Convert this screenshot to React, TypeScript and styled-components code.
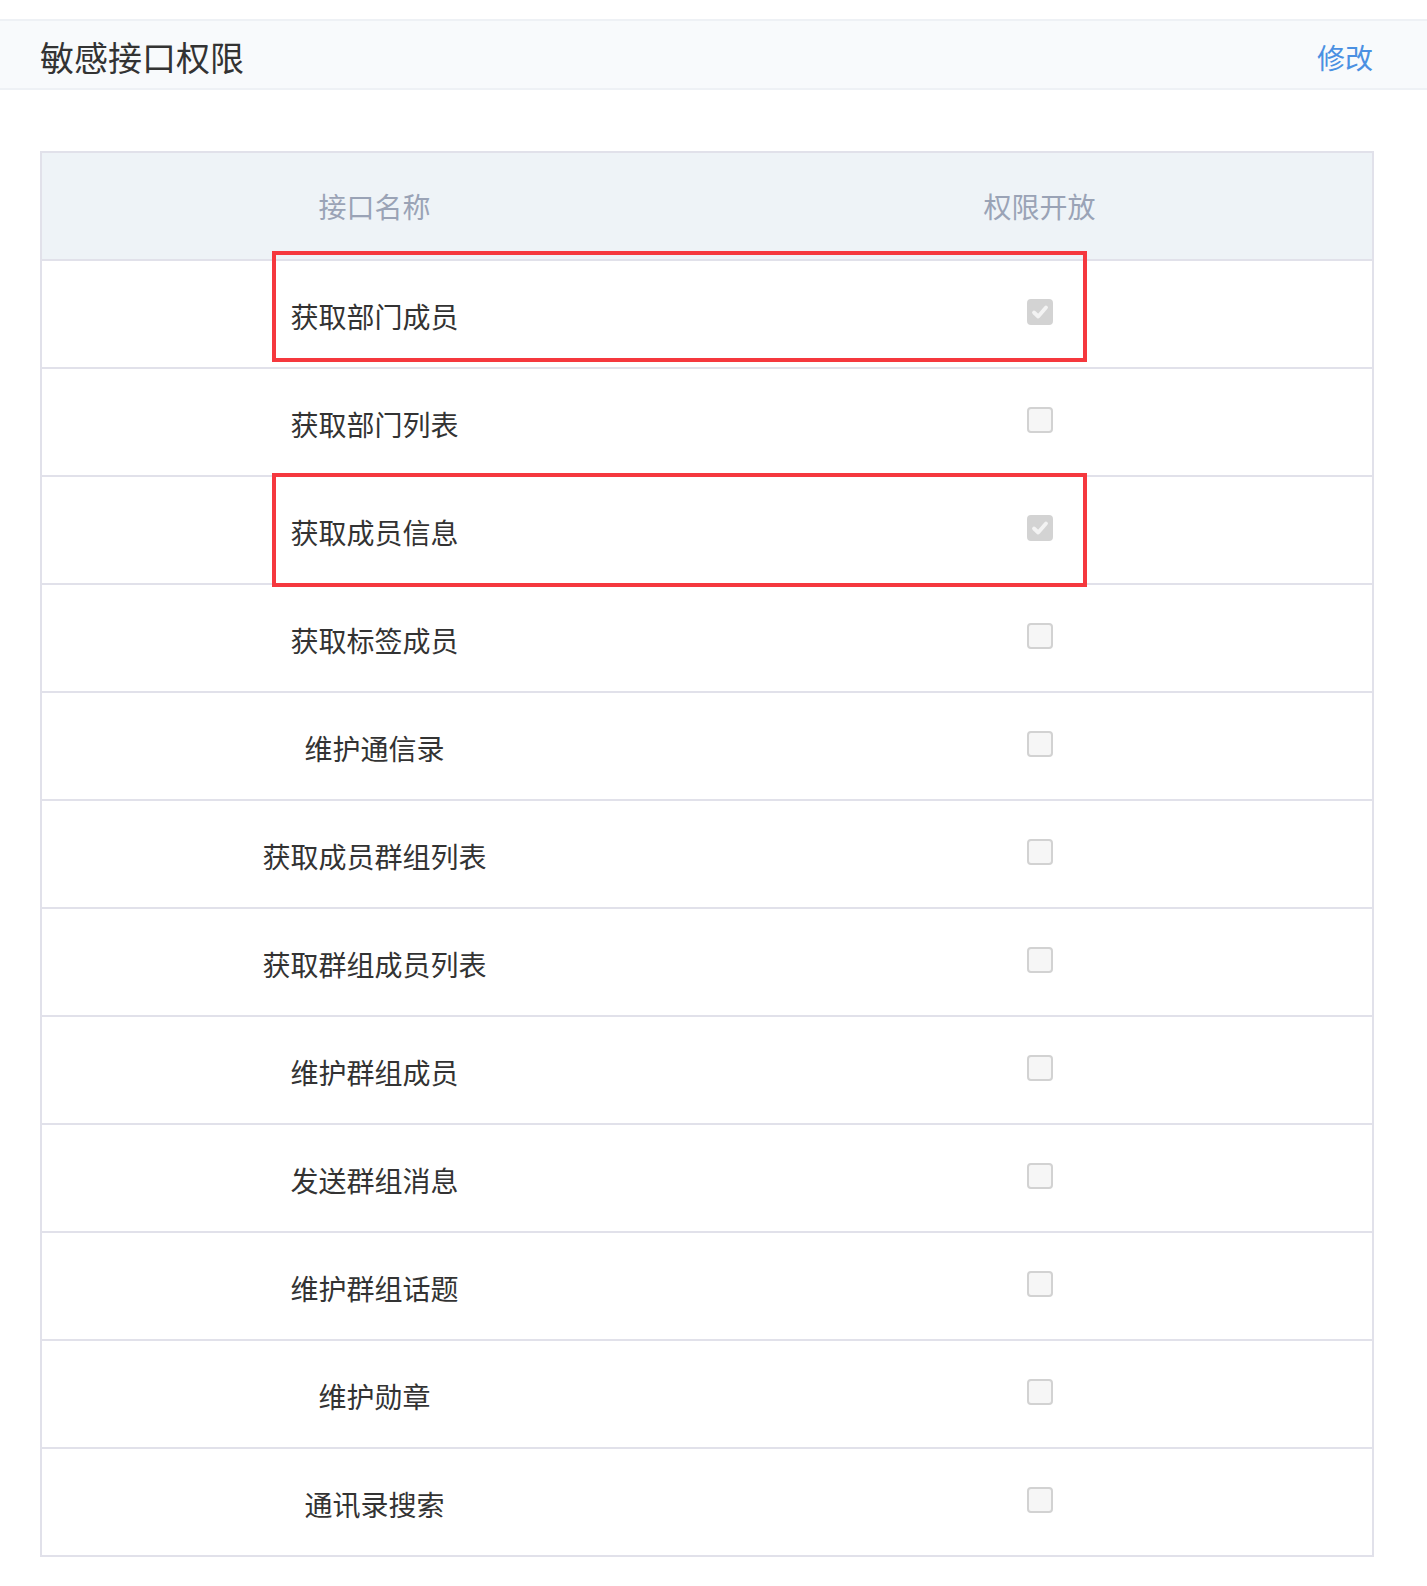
import React from "react";
import styled, { createGlobalStyle } from "styled-components";

const GlobalStyle = createGlobalStyle`
  body {
    margin: 0;
    background: #ffffff;
    font-family: "Noto Sans CJK SC", "Noto Sans", sans-serif;
  }
`;

const Page = styled.div`
  padding-top: 19px;
  padding-bottom: 30px;
`;

const TitleBar = styled.div`
  display: flex;
  align-items: center;
  justify-content: space-between;
  height: 62px;
  padding: 5px 54px 0 40px;
  background: #f8fafc;
  border-top: 2px solid #eef1f5;
  border-bottom: 2px solid #eef1f5;
`;

const Title = styled.div`
  font-size: 34px;
  color: #333333;
  line-height: 1;
`;

const EditLink = styled.a`
  font-size: 28px;
  color: #4a90e2;
  line-height: 1;
  cursor: pointer;
`;

const Table = styled.div`
  margin: 61px 53px 0 40px;
  border: 2px solid #e1e1ea;
`;

const HeadRow = styled.div`
  display: grid;
  grid-template-columns: 1fr 1fr;
  height: 106px;
  background: #eef3f7;
  border-bottom: 2px solid #e1e1ea;
`;

const HeadCell = styled.div`
  display: flex;
  align-items: center;
  justify-content: center;
  font-size: 28px;
  color: #9aa3b6;
`;

const Row = styled.div`
  position: relative;
  display: grid;
  grid-template-columns: 1fr 1fr;
  height: 106px;
  border-top: 2px solid #e1e1ea;

  &:first-of-type {
    border-top: none;
  }
`;

const Cell = styled.div`
  display: flex;
  align-items: center;
  justify-content: center;
  font-size: 28px;
  color: #333333;
  padding-top: 3px;
`;

const Check = styled.span<{ $on: boolean }>`
  display: inline-flex;
  align-items: center;
  justify-content: center;
  box-sizing: border-box;
  width: 26px;
  height: 26px;
  margin-bottom: 8px;
  border-radius: 4px;
  background: ${({ $on }) => ($on ? "#d3d3d3" : "#f6f6f6")};
  border: 2px solid ${({ $on }) => ($on ? "#d3d3d3" : "#d2d2d2")};
`;

const Highlight = styled.div<{ $top: number; $height: number }>`
  position: absolute;
  z-index: 1;
  left: 230px;
  width: 815px;
  top: ${({ $top }) => $top}px;
  height: ${({ $height }) => $height}px;
  box-sizing: border-box;
  border: 4px solid #f5383e;
  pointer-events: none;
`;

type Api = {
  name: string;
  on: boolean;
  mark?: { top: number; height: number };
};

const apis: Api[] = [
  { name: "获取部门成员", on: true, mark: { top: -10, height: 111 } },
  { name: "获取部门列表", on: false },
  { name: "获取成员信息", on: true, mark: { top: -4, height: 114 } },
  { name: "获取标签成员", on: false },
  { name: "维护通信录", on: false },
  { name: "获取成员群组列表", on: false },
  { name: "获取群组成员列表", on: false },
  { name: "维护群组成员", on: false },
  { name: "发送群组消息", on: false },
  { name: "维护群组话题", on: false },
  { name: "维护勋章", on: false },
  { name: "通讯录搜索", on: false },
];

const CheckMark = () => (
  <svg width="20" height="20" viewBox="0 0 20 20">
    <path
      d="M4 10.5 L8.2 14.5 L16 5.5"
      fill="none"
      stroke="#f3f3f3"
      strokeWidth="3.8"
      strokeLinecap="round"
      strokeLinejoin="round"
    />
  </svg>
);

const App: React.FC = () => {
  return (
    <Page>
      <GlobalStyle />
      <TitleBar>
        <Title>敏感接口权限</Title>
        <EditLink>修改</EditLink>
      </TitleBar>
      <Table>
        <HeadRow>
          <HeadCell>接口名称</HeadCell>
          <HeadCell>权限开放</HeadCell>
        </HeadRow>
        <div>
          {apis.map((api) => (
            <Row key={api.name}>
              <Cell>{api.name}</Cell>
              <Cell>
                <Check $on={api.on}>{api.on && <CheckMark />}</Check>
              </Cell>
              {api.mark && <Highlight $top={api.mark.top} $height={api.mark.height} />}
            </Row>
          ))}
        </div>
      </Table>
    </Page>
  );
};

export default App;
